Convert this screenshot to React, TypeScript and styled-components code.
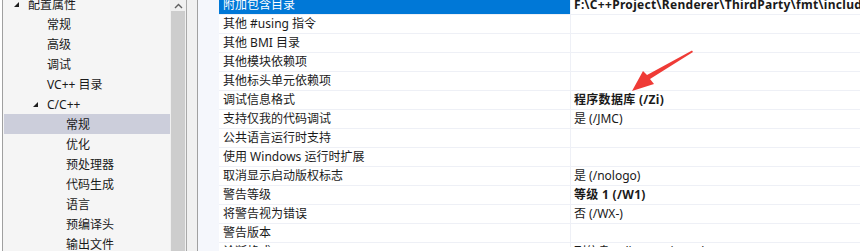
import styled, { createGlobalStyle } from 'styled-components';

const GlobalStyle = createGlobalStyle`
  html, body {
    margin: 0;
    padding: 0;
    background: #ffffff;
    overflow: hidden;
  }
  body {
    font-family: "Noto Sans", "Noto Sans CJK SC", sans-serif;
    font-size: 12px;
    color: #1a1a1a;
  }
`;

type TreeItem = { label: string; level: number; expanded?: boolean; selected?: boolean };

const treeItems: TreeItem[] = [
  { label: '配置属性', level: 0, expanded: true },
  { label: '常规', level: 1 },
  { label: '高级', level: 1 },
  { label: '调试', level: 1 },
  { label: 'VC++ 目录', level: 1 },
  { label: 'C/C++', level: 1, expanded: true },
  { label: '常规', level: 2, selected: true },
  { label: '优化', level: 2 },
  { label: '预处理器', level: 2 },
  { label: '代码生成', level: 2 },
  { label: '语言', level: 2 },
  { label: '预编译头', level: 2 },
  { label: '输出文件', level: 2 },
];

type Prop = { name: string; value?: string; bold?: boolean; selected?: boolean };

const props: Prop[] = [
  { name: '附加包含目录', value: 'F:\\C++Project\\Renderer\\ThirdParty\\fmt\\include', bold: true, selected: true },
  { name: '其他 #using 指令' },
  { name: '其他 BMI 目录' },
  { name: '其他模块依赖项' },
  { name: '其他标头单元依赖项' },
  { name: '调试信息格式', value: '程序数据库 (/Zi)', bold: true },
  { name: '支持仅我的代码调试', value: '是 (/JMC)' },
  { name: '公共语言运行时支持' },
  { name: '使用 Windows 运行时扩展' },
  { name: '取消显示启动版权标志', value: '是 (/nologo)' },
  { name: '警告等级', value: '等级 1 (/W1)', bold: true },
  { name: '将警告视为错误', value: '否 (/WX-)' },
  { name: '警告版本' },
  { name: '诊断格式', value: '列信息 (/diagnostics:column)' },
];

export default function App() {
  return (
    <>
      <GlobalStyle />
      <Window>
        <TreePane>
          <TreeList>
            {treeItems.map((item, i) => (
              <TreeRow key={i} $selected={item.selected} $level={item.level}>
                {item.expanded && <Expander />}
                {item.label}
              </TreeRow>
            ))}
          </TreeList>
        </TreePane>
        <ScrollBar>
          <ScrollArrow>
            <svg width="9" height="6" viewBox="0 0 9 6">
              <path d="M1 5 L4.5 1.5 L8 5" fill="none" stroke="#606060" strokeWidth="1.4" />
            </svg>
          </ScrollArrow>
          <ScrollThumb />
        </ScrollBar>
        <Splitter />
        <GridGutter />
        <Grid>
          {props.map((p, i) => (
            <GridRow key={i}>
              <NameCell $selected={p.selected}>{p.name}</NameCell>
              <ValueCell $bold={p.bold}>{p.value}</ValueCell>
            </GridRow>
          ))}
        </Grid>
        <Arrow width="80" height="50" viewBox="0 0 80 50">
          <path d="M72 0.5 L73 2 L30 29 L34 34 L12 41 L23 21 L27 25 Z" fill="#ef3b36" />
        </Arrow>
      </Window>
    </>
  );
}

const Window = styled.div`
  position: relative;
  display: flex;
  width: 860px;
  height: 251px;
  overflow: hidden;
  background: #ffffff;
`;

const TreePane = styled.div`
  width: 167px;
  height: 100%;
  margin-left: 2px;
  border-left: 1px solid #a0a0a0;
  background: #f5f5f5;
  overflow: hidden;
`;

const TreeList = styled.div`
  margin-top: -6px;
  padding-left: 1px;
`;

const TreeRow = styled.div<{ $selected?: boolean; $level: number }>`
  display: flex;
  align-items: center;
  height: 20px;
  padding-left: ${(p) => 24 + p.$level * 19}px;
  background: ${(p) => (p.$selected ? '#cccedb' : 'transparent')};
  white-space: nowrap;
`;

const Expander = styled.span`
  flex-shrink: 0;
  width: 5px;
  height: 5px;
  margin-left: -14px;
  margin-right: 9px;
  margin-top: 1px;
  background: #1e1e1e;
  clip-path: polygon(100% 0, 100% 100%, 0 100%);
`;

const ScrollBar = styled.div`
  display: flex;
  flex-direction: column;
  align-items: center;
  width: 16px;
  height: 100%;
  background: #f0f0f0;
`;

const ScrollArrow = styled.div`
  display: flex;
  align-items: center;
  justify-content: center;
  width: 16px;
  height: 11px;
`;

const ScrollThumb = styled.div`
  flex: 1;
  width: 14px;
  background: #cdcdcd;
`;

const Splitter = styled.div`
  width: 10px;
  height: 100%;
  background: #f0f0f0;
  border-left: 1px solid #a9a9a9;
  border-right: 1px solid #a0a0a0;
`;

const GridGutter = styled.div`
  width: 21px;
  height: 100%;
  background: #f5f7fc;
`;

const Grid = styled.div`
  flex: 1;
  height: 100%;
  margin-top: -4px;
  overflow: hidden;
  background: #ffffff;
`;

const GridRow = styled.div`
  display: flex;
  height: 19px;
  box-sizing: border-box;
  border-bottom: 1px solid #eef0f6;
`;

const NameCell = styled.div<{ $selected?: boolean }>`
  width: 352px;
  flex-shrink: 0;
  box-sizing: border-box;
  padding-left: 4px;
  line-height: 18px;
  white-space: nowrap;
  border-right: 1px solid #eef0f6;
  background: ${(p) => (p.$selected ? '#0078d7' : '#ffffff')};
  color: ${(p) => (p.$selected ? '#ffffff' : '#1a1a1a')};
`;

const ValueCell = styled.div<{ $bold?: boolean }>`
  flex: 1;
  padding-left: 3px;
  line-height: 18px;
  white-space: nowrap;
  overflow: hidden;
  font-weight: ${(p) => (p.$bold ? 700 : 400)};
  letter-spacing: ${(p) => (p.$bold ? '0.3px' : '0')};
`;

const Arrow = styled.svg`
  position: absolute;
  left: 620px;
  top: 50px;
`;
